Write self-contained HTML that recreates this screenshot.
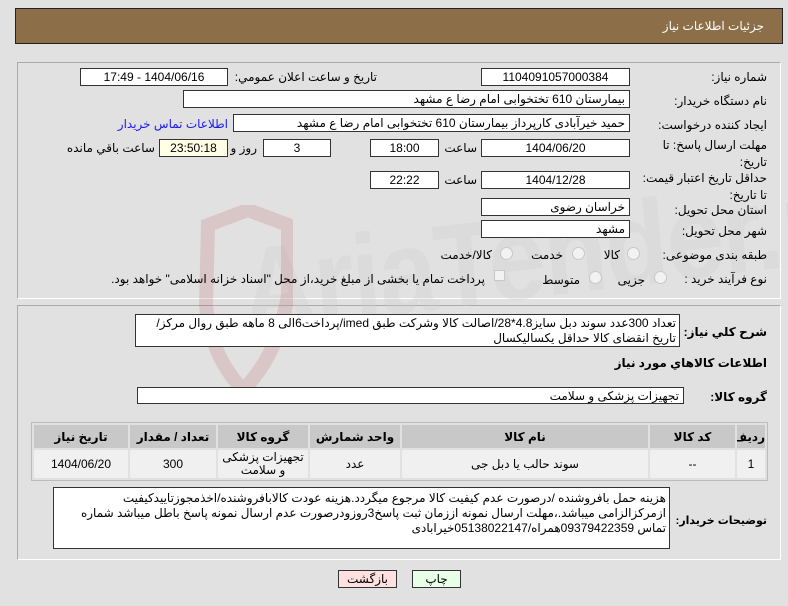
<!DOCTYPE html>
<html><head><meta charset="utf-8"><style>
*{box-sizing:border-box;margin:0;padding:0}
body{width:788px;height:606px;background:#e1e1e1;position:relative;overflow:hidden;font-family:"Liberation Sans","DejaVu Sans",sans-serif;font-size:12px;color:#000}
.a{position:absolute;white-space:nowrap}
.hdr{left:15px;top:8px;width:768px;height:36px;background:#8c6e48;border:1px solid #222}
.hdr span{position:absolute;right:18px;top:10px;color:#fff;font-size:12px}
.pan{position:absolute;border:1px solid #aaa;border-right-color:#fff;border-bottom-color:#fff;background:#e1e1e1}
.box{position:absolute;background:#fff;border:1px solid #333;height:18px;line-height:16px;padding:0 4px;white-space:nowrap;overflow:hidden;direction:rtl}
.c{text-align:center}
.l{position:absolute;white-space:nowrap;direction:rtl;text-align:right}
.b{font-weight:bold}
.rad{position:absolute;width:13px;height:13px;border-radius:50%;border:1px solid #c8c8c8;background:#f2f2f2}
table{border-collapse:separate;border-spacing:2px;table-layout:fixed}
td,th{background:#f0f0f0;text-align:center;font-size:12px;overflow:hidden}
th{background:#c8c8c8;height:23px}
td{height:28px}
.wm{position:absolute;left:235px;top:225px;font-size:104px;font-weight:bold;color:#cfcfcf;opacity:.3;letter-spacing:-2px;font-family:"Liberation Sans",sans-serif;transform:scaleY(1.15) rotate(-6deg);transform-origin:left top}
</style></head><body>
<div class="a hdr"><span>جزئیات اطلاعات نیاز</span></div>

<div class="pan" style="left:17px;top:62px;width:764px;height:237px"></div>
<div class="pan" style="left:17px;top:305px;width:764px;height:255px"></div>
<div class="wm">AriaTender.neT</div>
<svg class="a" style="left:198px;top:205px;opacity:.18" width="95" height="190" viewBox="0 0 95 190"><path d="M10 20 L50 5 L90 20 L90 90 Q80 150 45 185 Q12 150 8 100 Z" fill="none" stroke="#b85050" stroke-width="14"/></svg>

<div class="l" style="right:21px;top:70px">شماره نیاز:</div>
<div class="box c" style="left:481px;top:68px;width:149px">1104091057000384</div>
<div class="l" style="right:411px;top:70px">تاریخ و ساعت اعلان عمومي:</div>
<div class="box c" style="left:80px;top:68px;width:148px">1404/06/16 - 17:49</div>

<div class="l" style="right:21px;top:94px">نام دستگاه خريدار:</div>
<div class="box" style="left:183px;top:90px;width:447px">بیمارستان 610 تختخوابی امام رضا ع  مشهد</div>

<div class="l" style="right:21px;top:118px">ایجاد کننده درخواست:</div>
<div class="box" style="left:233px;top:114px;width:397px">حمید خیرآبادی کارپرداز بیمارستان 610 تختخوابی امام رضا ع  مشهد</div>
<div class="l" style="right:560px;top:117px;color:#1a1aee">اطلاعات تماس خریدار</div>

<div class="l" style="right:21px;top:137px;line-height:17px">مهلت ارسال پاسخ: تا<br>تاریخ:</div>
<div class="box c" style="left:481px;top:139px;width:149px">1404/06/20</div>
<div class="l" style="right:311px;top:141px">ساعت</div>
<div class="box c" style="left:370px;top:139px;width:69px">18:00</div>
<div class="box c" style="left:263px;top:139px;width:68px">3</div>
<div class="l" style="right:531px;top:141px">روز و</div>
<div class="box c" style="left:159px;top:139px;width:69px;background:#ffffe6">23:50:18</div>
<div class="l" style="right:633px;top:141px">ساعت باقي مانده</div>

<div class="l" style="right:21px;top:170px;line-height:17px">حداقل تاریخ اعتبار قیمت:<br>تا تاریخ:</div>
<div class="box c" style="left:481px;top:171px;width:149px">1404/12/28</div>
<div class="l" style="right:311px;top:173px">ساعت</div>
<div class="box c" style="left:370px;top:171px;width:69px">22:22</div>

<div class="l" style="right:21px;top:203px">استان محل تحویل:</div>
<div class="box" style="left:481px;top:198px;width:149px">خراسان رضوی</div>
<div class="l" style="right:21px;top:224px">شهر محل تحویل:</div>
<div class="box" style="left:481px;top:220px;width:149px">مشهد</div>

<div class="l" style="right:21px;top:248px">طبقه بندی موضوعی:</div>
<div class="rad" style="left:627px;top:247px"></div><div class="l" style="right:168px;top:248px">کالا</div>
<div class="rad" style="left:572px;top:247px"></div><div class="l" style="right:225px;top:248px">خدمت</div>
<div class="rad" style="left:500px;top:247px"></div><div class="l" style="right:296px;top:248px">کالا/خدمت</div>

<div class="l" style="right:21px;top:272px">نوع فرآیند خرید :</div>
<div class="rad" style="left:654px;top:271px"></div><div class="l" style="right:143px;top:273px">جزیی</div>
<div class="rad" style="left:589px;top:271px"></div><div class="l" style="right:208px;top:273px">متوسط</div>
<div class="a" style="left:494px;top:270px;width:11px;height:11px;border:1px solid #c8c8c8;background:#f2f2f2"></div>
<div class="l" style="right:303px;top:272px">پرداخت تمام یا بخشی از مبلغ خرید،از محل "اسناد خزانه اسلامی" خواهد بود.</div>

<div class="l b" style="right:21px;top:325px">شرح کلي نياز:</div>
<div class="box" style="left:135px;top:314px;width:545px;height:33px;white-space:normal;line-height:15px;padding:1px 3px">تعداد 300عدد سوند دبل سایز4.8*28/اصالت کالا وشرکت طبق imed/پرداخت6الی  8 ماهه طبق روال مرکز/تاریخ انقضای کالا حداقل یکسالیکسال</div>

<div class="l b" style="right:21px;top:356px">اطلاعات کالاهاي مورد نياز</div>
<div class="l b" style="right:21px;top:390px">گروه کالا:</div>
<div class="box" style="left:137px;top:387px;width:547px;height:17px">تجهیزات پزشکی و سلامت</div>

<div class="a" style="left:31px;top:422px;width:737px;height:59px;border:1px solid #bbb;background:#e1e1e1">
<table style="width:735px;direction:rtl" dir="rtl">
<tr><th style="width:28px">ردیف</th><th style="width:85px">کد کالا</th><th style="width:246px">نام کالا</th><th style="width:90px">واحد شمارش</th><th style="width:90px">گروه کالا</th><th style="width:86px">تعداد / مقدار</th><th style="width:94px">تاریخ نیاز</th></tr>
<tr><td>1</td><td>--</td><td>سوند حالب یا دبل جی</td><td>عدد</td><td style="line-height:13px;white-space:normal">تجهیزات پزشکی و سلامت</td><td>300</td><td>1404/06/20</td></tr>
</table></div>

<div class="l b" style="right:21px;top:514px;font-size:11px">توضیحات خریدار:</div>
<div class="box" style="left:53px;top:487px;width:617px;height:62px;white-space:normal;line-height:15px;padding:3px 3px">هزینه حمل بافروشنده /درصورت عدم کیفیت کالا مرجوع میگردد.هزینه عودت کالابافروشنده/اخذمجوزتاییدکیفیت ازمرکزالزامی میباشد.،مهلت ارسال نمونه اززمان ثبت پاسخ3روزودرصورت عدم ارسال نمونه پاسخ باطل میباشد شماره تماس 09379422359همراه/05138022147خیرابادی</div>

<div class="a c" style="left:338px;top:570px;width:59px;height:18px;background:#ffe0e0;border:1px solid #333;line-height:16px">بازگشت</div>
<div class="a c" style="left:412px;top:570px;width:49px;height:18px;background:#e8ffe8;border:1px solid #333;line-height:16px">چاپ</div>
</body></html>
